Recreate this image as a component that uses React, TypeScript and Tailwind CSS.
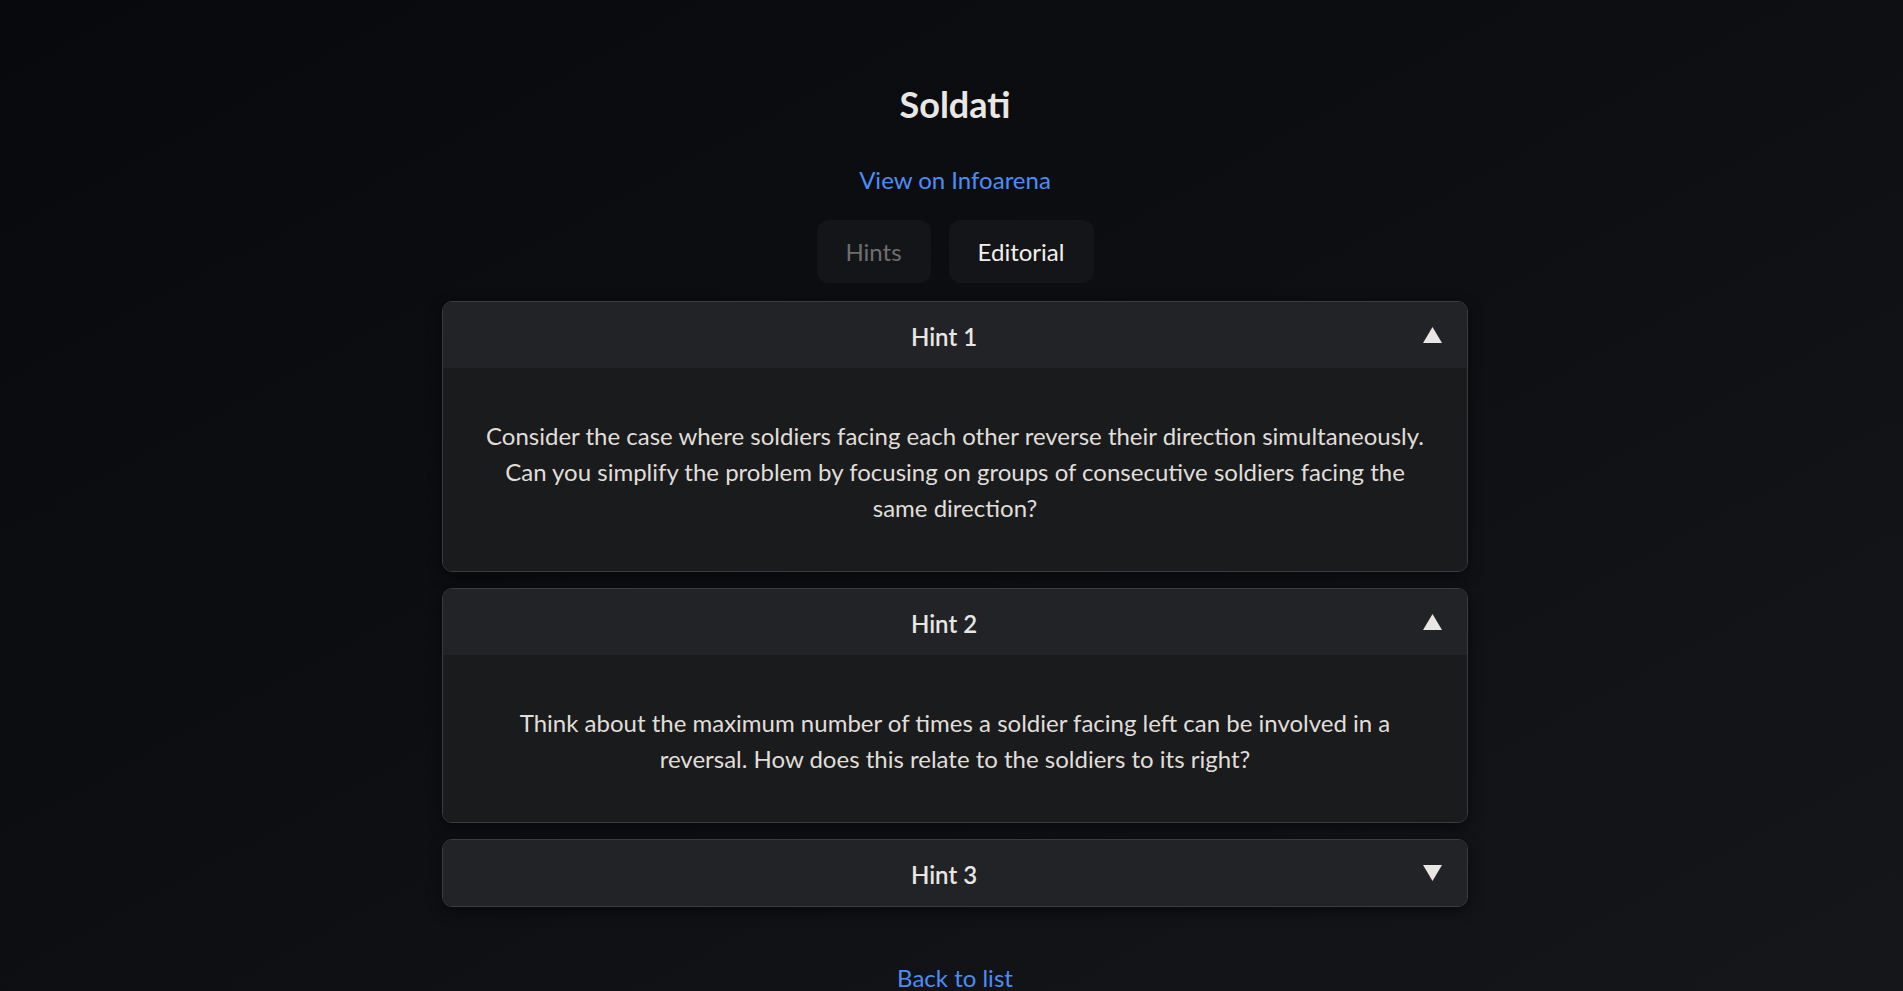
import React from "react";

type Hint = {
  title: string;
  open: boolean;
  lines: string[];
};

const hints: Hint[] = [
  {
    title: "Hint 1",
    open: true,
    lines: [
      "Consider the case where soldiers facing each other reverse their direction simultaneously.",
      "Can you simplify the problem by focusing on groups of consecutive soldiers facing the",
      "same direction?",
    ],
  },
  {
    title: "Hint 2",
    open: true,
    lines: [
      "Think about the maximum number of times a soldier facing left can be involved in a",
      "reversal. How does this relate to the soldiers to its right?",
    ],
  },
  {
    title: "Hint 3",
    open: false,
    lines: [],
  },
];

const Arrow = ({ up }: { up: boolean }) => (
  <svg width="19" height="16" viewBox="0 0 19 16" aria-hidden="true" className="shrink-0">
    {up ? (
      <polygon points="9.5,0 19,16 0,16" fill="#e9e7e3" />
    ) : (
      <polygon points="0,0 19,0 9.5,16" fill="#e9e7e3" />
    )}
  </svg>
);

const HintCard = ({ hint }: { hint: Hint }) => {
  return (
    <article className="rounded-[10px] border border-[#3a3c40] overflow-hidden shadow-[0_4px_14px_rgba(0,0,0,0.55)]">
      <header className="h-[66px] bg-[#212326] flex flex-row items-center pl-[26px] pr-[25px] gap-[4px]">
        <h3 className="flex-1 pt-[4px] text-center text-[24px] font-semibold text-[#e8e6e3]">
          {hint.title}
        </h3>
        <Arrow up={hint.open} />
      </header>
      {hint.open && (
        <div className="bg-[#1a1b1d] px-[32px] pt-[50px] pb-[45px]">
          <p className="text-center text-[24px] leading-[36px] text-[#e0ded9] whitespace-nowrap">
            {hint.lines.map((line, i) => (
              <React.Fragment key={i}>
                {line}
                {i < hint.lines.length - 1 && <br />}
              </React.Fragment>
            ))}
          </p>
        </div>
      )}
    </article>
  );
};

export default function App() {
  return (
    <main
      className="min-h-screen bg-linear-to-br from-[#08090c] via-[#0e0f13] to-[#16171b] flex flex-col items-center pl-[7px] pb-[40px]"
      style={{ fontFamily: '"Segoe UI", Lato, "Open Sans", sans-serif' }}
    >
      <h1 className="mt-[82px] text-[36px] leading-[44px] font-bold text-[#e9e7e3]">Soldati</h1>
      <a href="#" className="mt-[36px] text-[24px] leading-[36px] text-[#4b8df7]">
        View on Infoarena
      </a>
      <nav className="mt-[22px] flex flex-row gap-[18px]">
        <button className="w-[114px] h-[63px] rounded-[12px] bg-[#141518] text-[24px] text-[#6e6e70]">
          Hints
        </button>
        <button className="w-[145px] h-[63px] rounded-[12px] bg-[#141518] text-[24px] text-[#f2f0ec]">
          Editorial
        </button>
      </nav>
      <section className="mt-[18px] w-[1026px] flex flex-col gap-[16px]">
        {hints.map((hint) => (
          <HintCard key={hint.title} hint={hint} />
        ))}
      </section>
      <footer className="mt-[53px]">
        <a href="#" className="text-[24px] leading-[36px] text-[#4b8df7]">
          Back to list
        </a>
      </footer>
    </main>
  );
}
